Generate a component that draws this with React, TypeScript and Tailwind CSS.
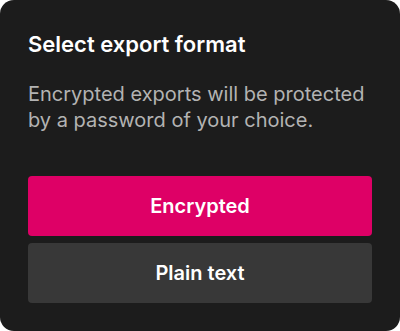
export default function App() {
  return (
    <div className="w-[400px] h-[331px] bg-white" style={{ fontFamily: "Inter, 'Noto Sans', sans-serif" }}>
      <div className="w-full h-full bg-[#1c1c1c] rounded-[14px] px-7 pt-[30px] flex flex-col">
        <h1 className="text-[22px] leading-[28px] font-semibold text-white">Select export format</h1>
        <p className="mt-[23px] text-[20px] leading-[26px] text-[#b3b3b3]">
          Encrypted exports will be protected by a password of your choice.
        </p>
        <div className="mt-[43px] flex flex-col gap-[7px]">
          <button className="h-[60px] rounded-[4px] bg-[#de0066] text-white text-[20px] font-semibold">Encrypted</button>
          <button className="h-[60px] rounded-[4px] bg-[#383838] text-white text-[20px] font-semibold">Plain text</button>
        </div>
      </div>
    </div>
  );
}
